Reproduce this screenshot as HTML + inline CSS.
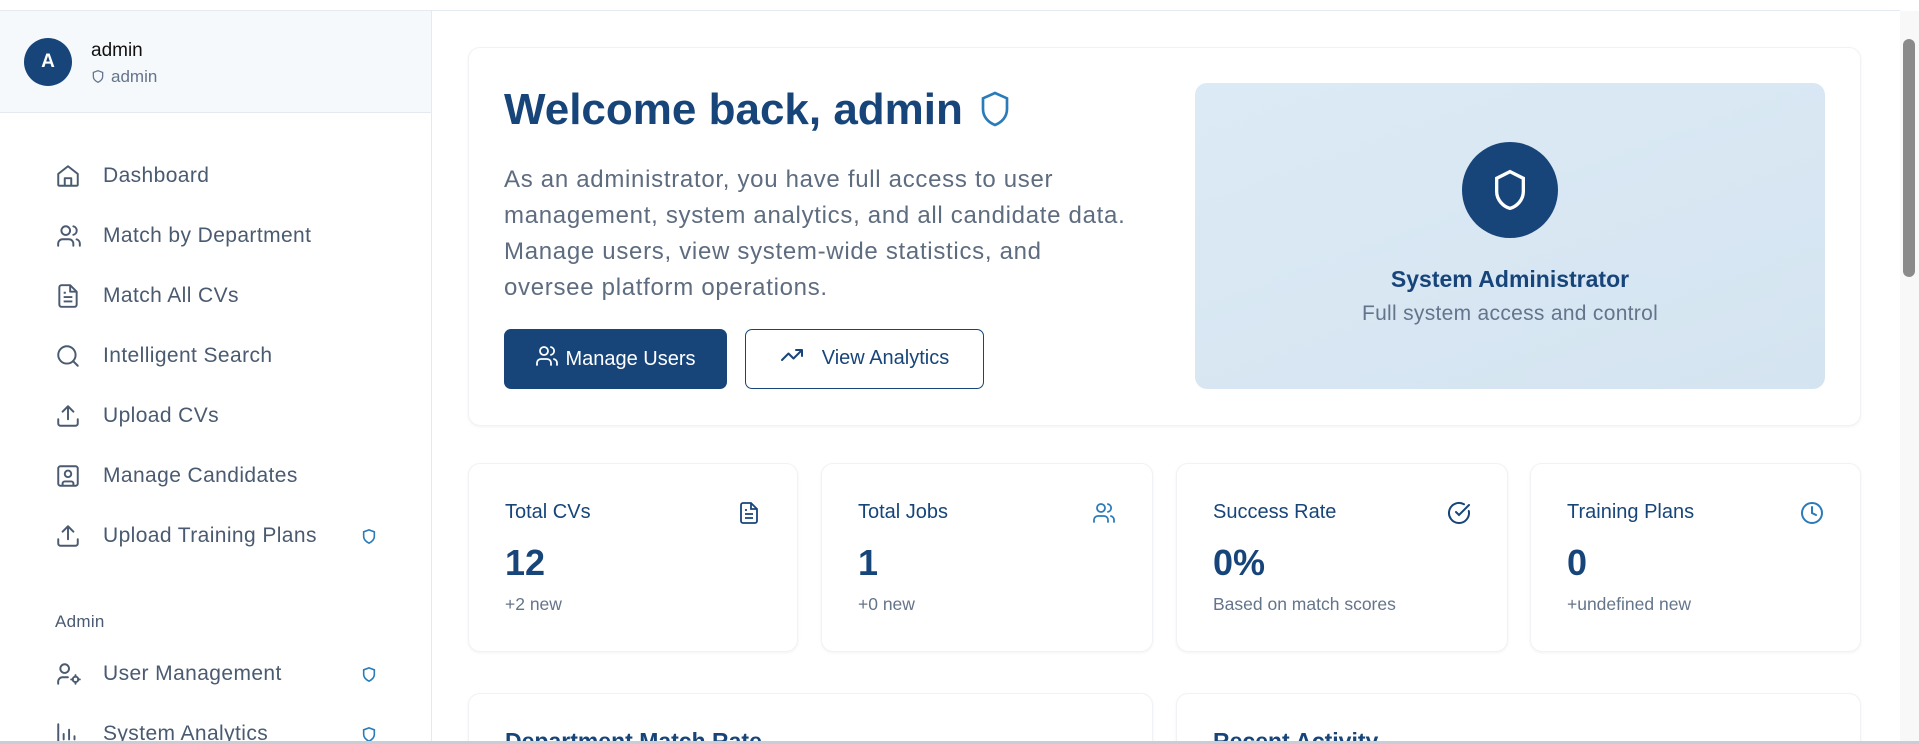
<!DOCTYPE html>
<html><head><meta charset="utf-8"><style>
*{box-sizing:border-box;margin:0;padding:0}
html{width:1919px;height:744px;overflow:hidden}
body{width:1919px;height:744px;overflow:hidden;background:#fff;font-family:"Liberation Sans",sans-serif;position:relative}
.topline{position:absolute;left:0;top:10px;width:1900px;height:1px;background:#e5eaf1}
.side{position:absolute;left:0;top:11px;width:432px;height:733px;border-right:1px solid #e5eaf1;background:#fff}
.sh{height:102px;background:#f5f9fc;border-bottom:1px solid #e5eaf1;position:relative}
.av{position:absolute;left:24px;top:27px;width:48px;height:48px;border-radius:50%;background:#17457a;color:#fff;font-weight:bold;font-size:19px;text-align:center;line-height:48px}
.un{position:absolute;left:91px;top:29px;font-size:19px;color:#111}
.ur{position:absolute;left:91px;top:56px;font-size:17px;color:#64748b}
.ur svg{vertical-align:-2px;margin-right:6px}
.nav{position:absolute;left:55px;font-size:21px;letter-spacing:0.4px;color:#4a5a70;height:30px;line-height:30px}
.nav svg{position:absolute;left:0;top:2px}
.nav span{position:absolute;left:48px;white-space:nowrap}
.bd{position:absolute;left:361px}
.lab{position:absolute;left:55px;top:612px;font-size:17px;letter-spacing:0.3px;color:#4a5a70}
.card{position:absolute;background:#fff;border:1px solid #f0f2f5;border-radius:12px;box-shadow:0 1px 3px rgba(0,0,0,.05);overflow:hidden}
.h1{position:absolute;left:504px;top:85px;font-size:44px;font-weight:bold;color:#17457a;white-space:nowrap}
.p{position:absolute;left:504px;top:162px;width:626px;font-size:24px;letter-spacing:0.7px;line-height:36px;color:#5e6c80}
.b1{position:absolute;left:504px;top:329px;width:223px;height:60px;border-radius:7px;background:#17457a;color:#fff;font-size:20px;line-height:60px;text-align:center}
.b2{position:absolute;left:745px;top:329px;width:239px;height:60px;border-radius:7px;border:1.5px solid #17457a;color:#17457a;font-size:20px;line-height:57px;text-align:center}
.b1 svg,.b2 svg{vertical-align:-3px;margin-right:6px}
.panel{position:absolute;left:1195px;top:83px;width:630px;height:306px;border-radius:12px;background:linear-gradient(160deg,#dceaf5,#d4e4f0)}
.circ{position:absolute;left:267px;top:59px;width:96px;height:96px;border-radius:50%;background:#17457a}
.circ svg{position:absolute;left:28px;top:26px}
.pt{position:absolute;left:0;width:100%;text-align:center;top:183px;font-size:23px;font-weight:bold;color:#17457a}
.ps{position:absolute;left:0;width:100%;text-align:center;top:219px;font-size:21px;letter-spacing:0.3px;color:#64748b}
.sl{position:absolute;top:37px;left:36px;font-size:20px;color:#17457a}
.sv{position:absolute;top:78px;left:36px;font-size:36px;font-weight:bold;color:#17457a}
.ss{position:absolute;top:130px;left:36px;font-size:17.5px;color:#64748b;white-space:nowrap}
.si{position:absolute;top:37px;right:36px}
.bt{position:absolute;left:36px;top:34px;font-size:23px;font-weight:bold;color:#17457a;white-space:nowrap}
.sb{position:absolute;left:1900px;top:11px;width:19px;height:733px;background:#f8f8f8}
.thumb{position:absolute;left:1903px;top:39px;width:12px;height:238px;border-radius:6px;background:#8a8a8a}
.bot{position:absolute;left:0;top:741px;width:1919px;height:3px;background:#c9ced6}
</style></head><body>
<div class="topline"></div>
<div class="side">
 <div class="sh">
  <div class="av">A</div>
  <div class="un">admin</div>
  <div class="ur"><svg width="14" height="15" viewBox="0 0 24 24" fill="none" stroke="#64748b" stroke-width="2.2"><path d="M12 2l8 3v7c0 5-4 8-8 10-4-2-8-5-8-10V5z"/></svg>admin</div>
 </div>
</div>
<div class="nav" style="top:161px"><svg width="26" height="26" viewBox="0 0 24 24" fill="none" stroke="#4a5a70" stroke-width="1.8" stroke-linejoin="round"><path d="M3 10l9-7 9 7v10a1 1 0 0 1-1 1H4a1 1 0 0 1-1-1z"/><path d="M9 21v-7h6v7"/></svg><span>Dashboard</span></div>
<div class="nav" style="top:221px"><svg width="28" height="26" viewBox="0 0 24 24" fill="none" stroke="#4a5a70" stroke-width="1.8" stroke-linecap="round"><circle cx="9" cy="7" r="4"/><path d="M2 21v-2a4 4 0 0 1 4-4h6a4 4 0 0 1 4 4v2"/><path d="M16 3.1a4 4 0 0 1 0 7.8M22 21v-2a4 4 0 0 0-3-3.9"/></svg><span>Match by Department</span></div>
<div class="nav" style="top:281px"><svg width="26" height="26" viewBox="0 0 24 24" fill="none" stroke="#4a5a70" stroke-width="1.8" stroke-linejoin="round"><path d="M14 2H6a2 2 0 0 0-2 2v16a2 2 0 0 0 2 2h12a2 2 0 0 0 2-2V8z"/><path d="M14 2v6h6M8 13h8M8 17h8M8 9h2"/></svg><span>Match All CVs</span></div>
<div class="nav" style="top:341px"><svg width="26" height="26" viewBox="0 0 24 24" fill="none" stroke="#4a5a70" stroke-width="1.8" stroke-linecap="round"><circle cx="11" cy="11" r="8"/><path d="M21 21l-4.3-4.3"/></svg><span>Intelligent Search</span></div>
<div class="nav" style="top:401px"><svg width="26" height="26" viewBox="0 0 24 24" fill="none" stroke="#4a5a70" stroke-width="1.8" stroke-linecap="round" stroke-linejoin="round"><path d="M21 15v4a2 2 0 0 1-2 2H5a2 2 0 0 1-2-2v-4M17 8l-5-5-5 5M12 3v12"/></svg><span>Upload CVs</span></div>
<div class="nav" style="top:461px"><svg width="26" height="26" viewBox="0 0 24 24" fill="none" stroke="#4a5a70" stroke-width="1.8"><rect x="3" y="3" width="18" height="18" rx="2"/><circle cx="12" cy="10" r="3"/><path d="M7 21v-2a2 2 0 0 1 2-2h6a2 2 0 0 1 2 2v2"/></svg><span>Manage Candidates</span></div>
<div class="nav" style="top:521px"><svg width="26" height="26" viewBox="0 0 24 24" fill="none" stroke="#4a5a70" stroke-width="1.8" stroke-linecap="round" stroke-linejoin="round"><path d="M21 15v4a2 2 0 0 1-2 2H5a2 2 0 0 1-2-2v-4M17 8l-5-5-5 5M12 3v12"/></svg><span>Upload Training Plans</span></div>
<div class="lab">Admin</div>
<div class="nav" style="top:659px"><svg width="28" height="26" viewBox="0 0 24 24" fill="none" stroke="#4a5a70" stroke-width="1.8" stroke-linecap="round"><circle cx="8" cy="7" r="4"/><path d="M2 21v-2a4 4 0 0 1 4-4h5"/><circle cx="18" cy="17" r="2.5"/><path d="M18 13v1.5M18 19.5V21M14 17h1.5M20.5 17H22"/></svg><span>User Management</span></div>
<div class="nav" style="top:719px"><svg width="26" height="26" viewBox="0 0 24 24" fill="none" stroke="#4a5a70" stroke-width="1.8" stroke-linecap="round"><path d="M3 3v18h18M8 17v-5M13 17V8M18 17v-3"/></svg><span>System Analytics</span></div>
<svg class="bd" style="top:528px" width="16" height="17" viewBox="0 0 24 24" fill="none" stroke="#2b7bb9" stroke-width="2.4"><path d="M12 2l8 3v7c0 5-4 8-8 10-4-2-8-5-8-10V5z"/></svg>
<svg class="bd" style="top:666px" width="16" height="17" viewBox="0 0 24 24" fill="none" stroke="#2b7bb9" stroke-width="2.4"><path d="M12 2l8 3v7c0 5-4 8-8 10-4-2-8-5-8-10V5z"/></svg>
<svg class="bd" style="top:726px" width="16" height="17" viewBox="0 0 24 24" fill="none" stroke="#2b7bb9" stroke-width="2.4"><path d="M12 2l8 3v7c0 5-4 8-8 10-4-2-8-5-8-10V5z"/></svg>

<div class="card" style="left:468px;top:47px;width:1393px;height:379px"></div>
<div class="h1">Welcome back, admin <svg width="32" height="38" viewBox="0 0 24 28" fill="none" stroke="#2b7bb9" stroke-width="2" style="vertical-align:-4px;margin-left:4px"><path d="M12 2l9 4v8c0 6-4 10-9 12-5-2-9-6-9-12V6z"/></svg></div>
<div class="p">As an administrator, you have full access to user management, system analytics, and all candidate data. Manage users, view system-wide statistics, and oversee platform operations.</div>
<div class="b1"><svg width="24" height="24" viewBox="0 0 24 24" fill="none" stroke="#fff" stroke-width="1.8" stroke-linecap="round"><circle cx="9" cy="7" r="4"/><path d="M2 21v-2a4 4 0 0 1 4-4h6a4 4 0 0 1 4 4v2"/><path d="M16 3.1a4 4 0 0 1 0 7.8M22 21v-2a4 4 0 0 0-3-3.9"/></svg>Manage Users</div>
<div class="b2"><svg width="24" height="24" viewBox="0 0 24 24" fill="none" stroke="#17457a" stroke-width="2" stroke-linecap="round" stroke-linejoin="round" style="margin-right:18px"><path d="M22 7l-8.5 8.5-5-5L2 17M16 7h6v6"/></svg>View Analytics</div>
<div class="panel"><div class="circ"><svg width="40" height="44" viewBox="0 0 24 26" fill="none" stroke="#fff" stroke-width="2"><path d="M12 2l8 4v8c0 5-4 9-8 10-4-1-8-5-8-10V6z"/></svg></div>
<div class="pt">System Administrator</div><div class="ps">Full system access and control</div></div>

<div class="card" style="left:468px;top:463px;width:330px;height:189px"><div class="sl">Total CVs</div><svg class="si" width="24" height="24" viewBox="0 0 24 24" fill="none" stroke="#17457a" stroke-width="1.8"><path d="M14 2H6a2 2 0 0 0-2 2v16a2 2 0 0 0 2 2h12a2 2 0 0 0 2-2V8z"/><path d="M14 2v6h6M8 13h8M8 17h8M8 9h2"/></svg><div class="sv">12</div><div class="ss">+2 new</div></div>
<div class="card" style="left:821px;top:463px;width:332px;height:189px"><div class="sl">Total Jobs</div><svg class="si" width="24" height="24" viewBox="0 0 24 24" fill="none" stroke="#2b7bb9" stroke-width="1.8" stroke-linecap="round"><circle cx="9" cy="7" r="4"/><path d="M2 21v-2a4 4 0 0 1 4-4h6a4 4 0 0 1 4 4v2"/><path d="M16 3.1a4 4 0 0 1 0 7.8M22 21v-2a4 4 0 0 0-3-3.9"/></svg><div class="sv">1</div><div class="ss">+0 new</div></div>
<div class="card" style="left:1176px;top:463px;width:332px;height:189px"><div class="sl">Success Rate</div><svg class="si" width="24" height="24" viewBox="0 0 24 24" fill="none" stroke="#17457a" stroke-width="2" stroke-linecap="round"><path d="M21.8 10A10 10 0 1 1 17 3.3"/><path d="M9 11l3 3L22 4"/></svg><div class="sv">0%</div><div class="ss">Based on match scores</div></div>
<div class="card" style="left:1530px;top:463px;width:331px;height:189px"><div class="sl">Training Plans</div><svg class="si" width="24" height="24" viewBox="0 0 24 24" fill="none" stroke="#2b7bb9" stroke-width="2" stroke-linecap="round"><circle cx="12" cy="12" r="10"/><path d="M12 6v6l4 2"/></svg><div class="sv">0</div><div class="ss">+undefined new</div></div>

<div class="card" style="left:468px;top:693px;width:685px;height:51px;border-bottom:none;border-radius:12px 12px 0 0"><div class="bt">Department Match Rate</div></div>
<div class="card" style="left:1176px;top:693px;width:685px;height:51px;border-bottom:none;border-radius:12px 12px 0 0"><div class="bt">Recent Activity</div></div>

<div class="sb"></div><div class="thumb"></div>
<div class="bot"></div>
</body></html>
